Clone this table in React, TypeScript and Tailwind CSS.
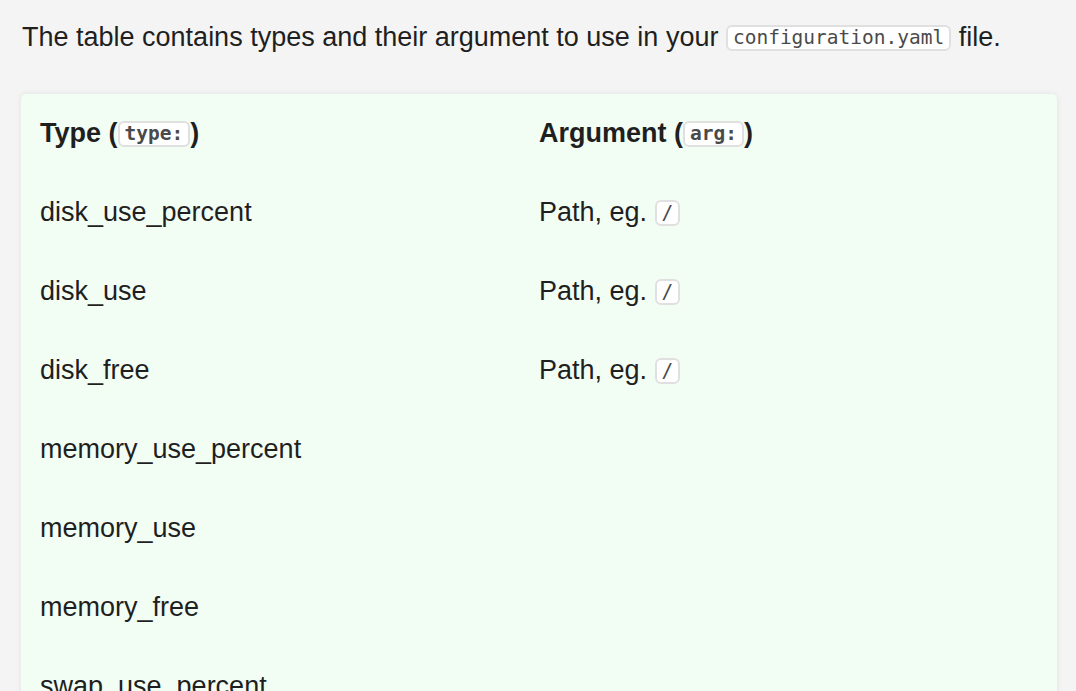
import React from "react";

const Code = ({ children }: { children: React.ReactNode }) => (
  <code className="inline-block rounded-[6px] border-2 border-[#e0e0e0] bg-white px-[5px] text-[19.5px] leading-[22px] text-[#4a4a4a] [font-family:'DejaVu_Sans_Mono',monospace] align-[2px]">
    {children}
  </code>
);

const rows: [string, boolean][] = [
  ["disk_use_percent", true],
  ["disk_use", true],
  ["disk_free", true],
  ["memory_use_percent", false],
  ["memory_use", false],
  ["memory_free", false],
  ["swap_use_percent", false],
  ["swap_use", false],
];

export default function App() {
  return (
    <div className="h-[691px] overflow-hidden bg-[#f4f4f4] pl-[21px] pr-[19px] pt-[19px] text-[27px] text-[#1f1f1f] [font-family:'Liberation_Sans',Arial,sans-serif]">
      <p className="pl-[1px] leading-[36px]">
        The table contains types and their argument to use in your <Code>configuration.yaml</Code> file.
      </p>
      <div className="mt-[39px] rounded-[5px] bg-[#f2fdf4] px-[19px] shadow-[0_0_6px_rgba(0,0,0,0.08)]">
        <div className="grid grid-cols-2">
          <div className="flex h-[79px] items-center font-bold">
            <span>
              Type (<Code>type:</Code>)
            </span>
          </div>
          <div className="flex h-[79px] items-center font-bold">
            <span>
              Argument (<Code>arg:</Code>)
            </span>
          </div>
          {rows.map(([t, p]) => (
            <React.Fragment key={t}>
              <div className="flex h-[79px] items-center">{t}</div>
              <div className="flex h-[79px] items-center">
                {p ? (
                  <span>
                    Path, eg. <Code>/</Code>
                  </span>
                ) : null}
              </div>
            </React.Fragment>
          ))}
        </div>
      </div>
    </div>
  );
}
